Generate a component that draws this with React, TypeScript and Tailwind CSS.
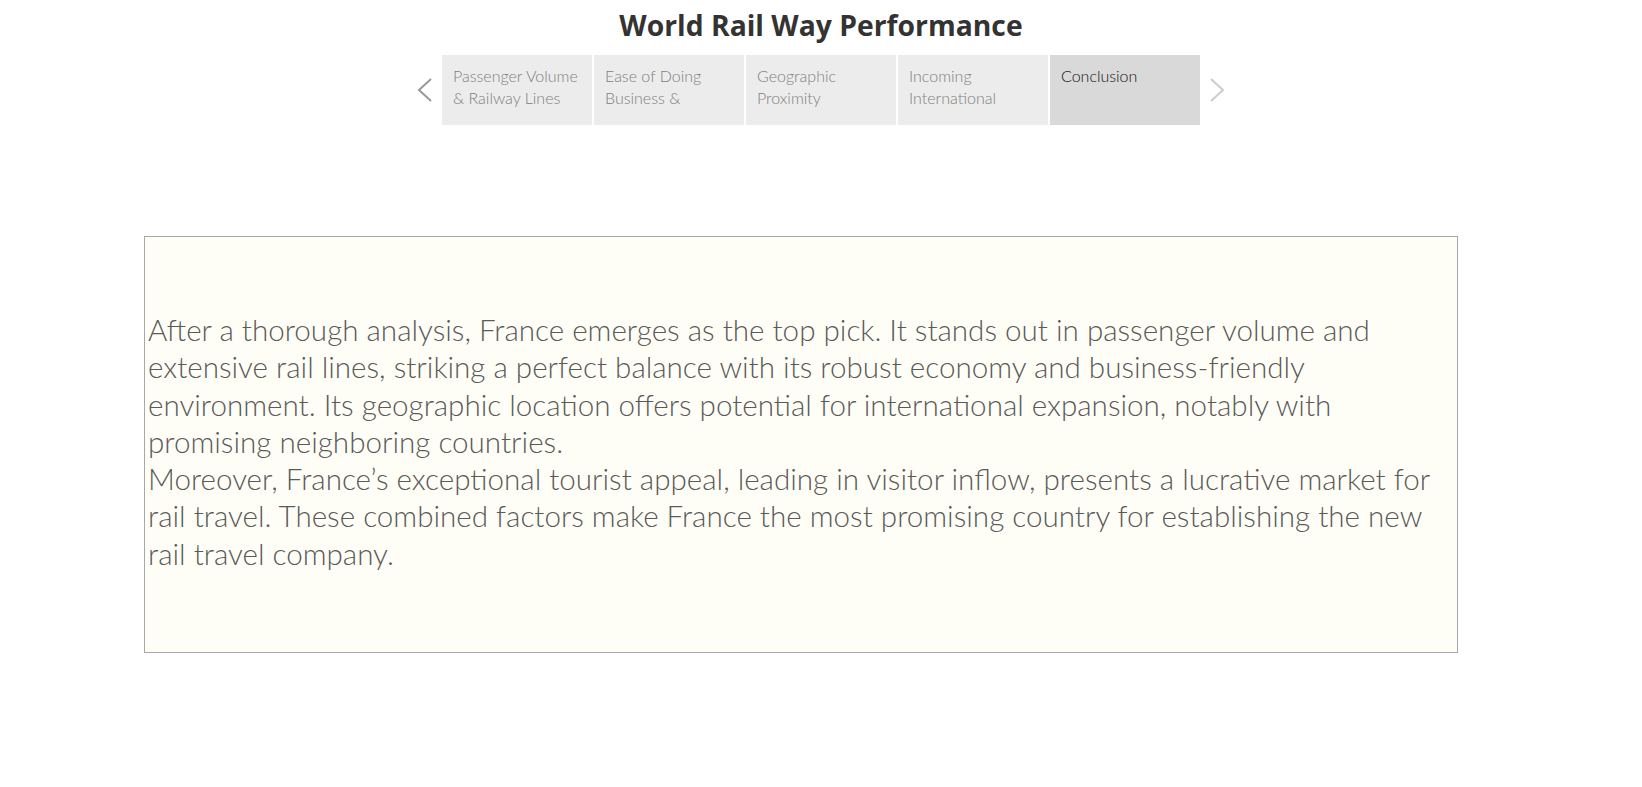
import React from "react";

const tabs: { lines: string[]; active?: boolean }[] = [
  { lines: ["Passenger Volume", "& Railway Lines"] },
  { lines: ["Ease of Doing", "Business &"] },
  { lines: ["Geographic", "Proximity"] },
  { lines: ["Incoming", "International"] },
  { lines: ["Conclusion"], active: true },
];

export default function App() {
  return (
    <div className="w-[1642px] h-[787px] bg-white overflow-hidden flex flex-col" style={{ fontFamily: "Lato, 'Open Sans', sans-serif" }}>
      <div className="pt-[8px] h-[42px] text-center text-[28.3px] leading-[34px] font-bold text-[#333333]" style={{ fontFamily: "'Open Sans', sans-serif" }}>
        World Rail Way Performance
      </div>
      <div className="mt-[13px] flex items-center justify-center h-[70px]">
        <div className="w-[25px] h-[70px] flex items-center justify-start">
          <svg width="16" height="24" viewBox="0 0 16 24">
            <path d="M14 1 L2 12 L14 23" fill="none" stroke="#999999" strokeWidth="2" />
          </svg>
        </div>
        <div className="flex gap-[2px]">
          {tabs.map((t, i) => (
            <div
              key={i}
              className={
                "w-[150px] h-[70px] px-[11px] pt-[10px] overflow-hidden text-[16px] leading-[22px] font-light " +
                (t.active ? "bg-[#d9d9d9] text-[#111111]" : "bg-[#ececec] text-[#808080]")
              }
            >
              {t.lines.map((l, j) => (
                <div key={j} className="whitespace-nowrap">{l}</div>
              ))}
            </div>
          ))}
        </div>
        <div className="w-[25px] h-[70px] flex items-center justify-end">
          <svg width="16" height="24" viewBox="0 0 16 24">
            <path d="M2 1 L14 12 L2 23" fill="none" stroke="#cccccc" strokeWidth="2" />
          </svg>
        </div>
      </div>
      <div className="mt-[111px] ml-[144px] w-[1314px] h-[417px] border border-[#a8a8a8] bg-[#fffef6] flex items-center pl-[3px] pb-[6px]">
        <p className="text-[29.6px] leading-[37.2px] font-light text-[#5a5a5a]">
          After a thorough analysis, France emerges as the top pick. It stands out in passenger volume and extensive rail lines, striking a perfect balance with its robust economy and business-friendly environment. Its geographic location offers potential for international expansion, notably with promising neighboring countries.
          <br />
          Moreover, France’s exceptional tourist appeal, leading in visitor inflow, presents a lucrative market for rail travel. These combined factors make France the most promising country for establishing the new rail travel company.
        </p>
      </div>
    </div>
  );
}
